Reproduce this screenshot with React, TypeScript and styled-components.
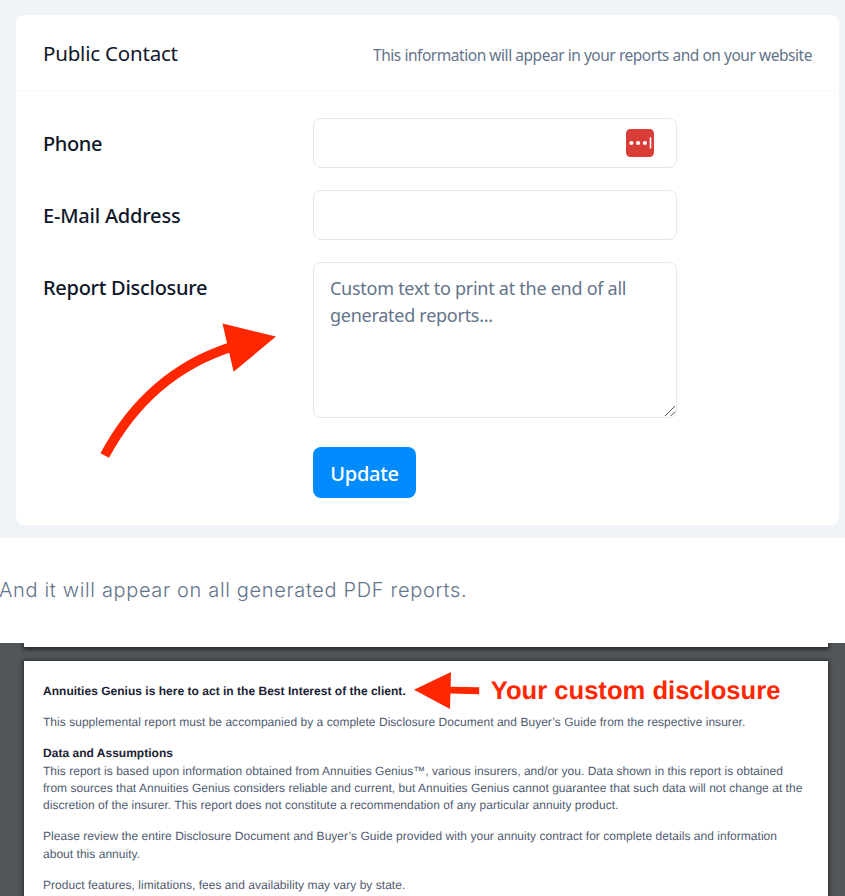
import React from "react";
import styled, { createGlobalStyle } from "styled-components";

const App = () => {
  return (
    <>
      <GlobalStyle />
      <SettingsStyle>
        <Card>
          <CardHeader>
            <Title>Public Contact</Title>
            <Hint>
              This information will appear in your reports and on your website
            </Hint>
          </CardHeader>
          <Form>
            <Label $spacing={-0.4}>Phone</Label>
            <Field>
              <Input type="text" aria-label="Phone" />
              <PasswordBadge viewBox="0 0 28 28">
                <rect width="28" height="28" rx="4.5" fill="#d93d37" />
                <circle cx="5.4" cy="14" r="2.1" fill="#fff" />
                <circle cx="12.1" cy="14" r="2.1" fill="#fff" />
                <circle cx="18.9" cy="14" r="2.1" fill="#fff" />
                <rect x="23.7" y="8.2" width="1.6" height="11.4" rx="0.6" fill="#fff" />
              </PasswordBadge>
            </Field>
            <Label $spacing={-0.2}>E-Mail Address</Label>
            <Field>
              <Input type="text" aria-label="E-Mail Address" />
            </Field>
            <Label $spacing={-0.28}>Report Disclosure</Label>
            <Field>
              <TextArea placeholder="Custom text to print at the end of all generated reports..." />
              <Grip viewBox="0 0 12 12">
                <path d="M1 11 11 1M6.6 11 11 6.6" stroke="#555" strokeWidth="1" fill="none" />
              </Grip>
            </Field>
          </Form>
          <Update type="button">Update</Update>
        </Card>
        <CurvedArrow viewBox="0 0 180 140">
          <path d="M4.7 135.5C34.5 80 76 45 130 27.3" stroke="#ff2600" strokeWidth="9.8" fill="none" />
          <path d="M122.5 3.5 176 16.5 133.6 51.8Z" fill="#ff2600" />
        </CurvedArrow>
      </SettingsStyle>

      <Caption>And it will appear on all generated PDF reports.</Caption>

      <Viewer>
        <PreviousPage />
        <Page>
          <LeadRow>
            <Heading>
              Annuities Genius is here to act in the Best Interest of the client.
            </Heading>
            <LeftArrow viewBox="0 0 66 38">
              <path d="M36 14.8 65.2 15.2V22.2L36 21.4Z" fill="#ff2600" />
              <path d="M0 17.8 37 0 36 37Z" fill="#ff2600" />
            </LeftArrow>
            <Callout>Your custom disclosure</Callout>
          </LeadRow>
          <Paragraph>
            This supplemental report must be accompanied by a complete
            Disclosure Document and Buyer’s Guide from the respective insurer.
          </Paragraph>
          <Heading>Data and Assumptions</Heading>
          <Paragraph>
            This report is based upon information obtained from Annuities
            Genius™, various insurers, and/or you. Data shown in this report is
            obtained
            <br />
            from sources that Annuities Genius considers reliable and current,
            but Annuities Genius cannot guarantee that such data will not change
            at the
            <br />
            discretion of the insurer. This report does not constitute a
            recommendation of any particular annuity product.
          </Paragraph>
          <Paragraph>
            Please review the entire Disclosure Document and Buyer’s Guide
            provided with your annuity contract for complete details and
            information
            <br />
            about this annuity.
          </Paragraph>
          <Paragraph>
            Product features, limitations, fees and availability may vary by
            state.
          </Paragraph>
        </Page>
      </Viewer>
    </>
  );
};

const GlobalStyle = createGlobalStyle`
  * {
    box-sizing: border-box;
  }

  body {
    margin: 0;
    background: #ffffff;
    overflow: hidden;
  }

  input,
  textarea,
  button {
    font-family: "Noto Sans", sans-serif;
  }
`;

const SettingsStyle = styled.section`
  position: relative;
  height: 538px;
  padding: 14.5px 6px 13px 16px;
  background: #f0f4f9;
  font-family: "Noto Sans", sans-serif;
`;

const Card = styled.div`
  height: 510.5px;
  background: #ffffff;
  border-radius: 8px;
`;

const CardHeader = styled.header`
  display: flex;
  justify-content: space-between;
  align-items: center;
  height: 77px;
  padding: 0 27px;
  border-bottom: 2px solid #fafbfc;
`;

const Title = styled.h2`
  margin: 0;
  padding-top: 2px;
  font-size: 20.5px;
  font-weight: 400;
  line-height: 28px;
  letter-spacing: -0.2px;
  color: #0f172a;
  white-space: nowrap;
`;

const Hint = styled.span`
  padding-top: 5px;
  font-size: 15.5px;
  line-height: 22px;
  letter-spacing: -0.46px;
  color: #64748b;
  white-space: nowrap;
`;

const Form = styled.div`
  display: grid;
  grid-template-columns: 270px 364px;
  row-gap: 22px;
  padding: 26px 27px 0;
`;

const Label = styled.label<{ $spacing: number }>`
  padding-top: 12px;
  font-size: 20px;
  font-weight: 500;
  line-height: 28px;
  letter-spacing: ${(props) => props.$spacing}px;
  color: #0f172a;
`;

const Field = styled.div`
  position: relative;
  display: flex;
`;

const Input = styled.input`
  width: 100%;
  height: 50px;
  padding: 0 17px;
  border: 1.5px solid #e2e8f0;
  border-radius: 8px;
  outline: none;
  background: #ffffff;
`;

const TextArea = styled.textarea`
  width: 100%;
  height: 156.5px;
  padding: 12px 16px;
  border: 1.5px solid #e2e8f0;
  border-radius: 8px;
  outline: none;
  resize: none;
  font-size: 18px;
  line-height: 27px;
  letter-spacing: -0.27px;

  &::placeholder {
    color: #64748b;
    opacity: 1;
  }
`;

const PasswordBadge = styled.svg`
  position: absolute;
  top: 11px;
  right: 23px;
  width: 28px;
  height: 28px;
`;

const Grip = styled.svg`
  position: absolute;
  right: 1px;
  bottom: 1px;
  width: 12px;
  height: 12px;
`;

const Update = styled.button`
  display: block;
  width: 103px;
  height: 51px;
  margin: 28.5px 0 0 297px;
  padding: 2px 0 0;
  border: none;
  border-radius: 8px;
  background: #008cff;
  color: #ffffff;
  font-size: 20px;
  font-weight: 500;
  letter-spacing: -0.3px;
`;

const CurvedArrow = styled.svg`
  position: absolute;
  left: 100px;
  top: 320px;
  width: 180px;
  height: 140px;
`;

const Caption = styled.p`
  height: 105px;
  margin: 0 0 0 -1px;
  font-family: Inter, sans-serif;
  font-size: 20px;
  font-weight: 300;
  line-height: 105px;
  letter-spacing: 0.65px;
  color: #64748b;
  white-space: nowrap;
`;

const Viewer = styled.section`
  height: 253px;
  padding: 0 17px 0 23.5px;
  background: #525659;
  overflow: hidden;
`;

const PreviousPage = styled.div`
  height: 4px;
  margin-bottom: 13.5px;
  background: #ffffff;
  box-shadow: 0 1px 5px 1px rgba(0, 0, 0, 0.65);
`;

const Page = styled.article`
  height: 260px;
  padding: 22.5px 19.5px;
  background: #ffffff;
  box-shadow: 0 0 4px 1px rgba(0, 0, 0, 0.5);
  font-family: "Liberation Sans", sans-serif;
  text-rendering: geometricPrecision;
`;

const LeadRow = styled.div`
  display: flex;
  align-items: center;
  height: 17px;
  margin-bottom: 14px;
`;

const Heading = styled.h3`
  margin: 0;
  font-size: 12px;
  font-weight: 700;
  line-height: 17.3px;
  letter-spacing: 0.02px;
  color: #1a2233;
  white-space: nowrap;
`;

const LeftArrow = styled.svg`
  flex: none;
  width: 66px;
  height: 38px;
  margin: -2px 0 0 8px;
`;

const Callout = styled.span`
  margin: -2px 0 0 11px;
  font-size: 25.6px;
  font-weight: 700;
  line-height: 30px;
  color: #ff2600;
  white-space: nowrap;
`;

const Paragraph = styled.p`
  margin: 0 0 14px;
  font-size: 12px;
  line-height: 17.3px;
  letter-spacing: 0.03px;
  color: #505b70;
  white-space: nowrap;
`;

export default App;
